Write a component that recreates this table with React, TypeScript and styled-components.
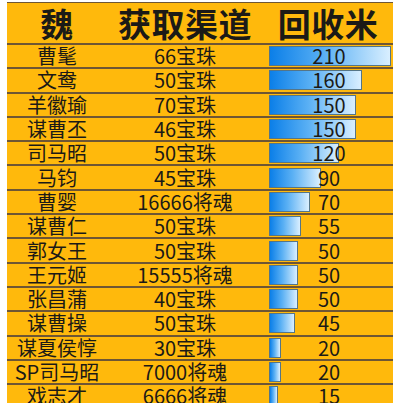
import { Fragment } from "react";
import styled, { createGlobalStyle } from "styled-components";

const GlobalStyle = createGlobalStyle`
  html, body {
    margin: 0;
    padding: 0;
    background: #ffffff;
  }
  body {
    font-family: "Noto Sans CJK SC", "Noto Sans", sans-serif;
    color: #1b1a17;
  }
`;

const Page = styled.div`
  width: 400px;
  height: 403px;
  overflow: hidden;
  padding: 2px 7px 0 7px;
  box-sizing: border-box;
`;

const Table = styled.div`
  background: #ffb90c;
  border-top: 1px solid #6e5634;
  display: grid;
  grid-template-columns: 100px 156px 130px;
`;

const HeadCell = styled.div`
  height: 40px;
  border-bottom: 2px solid #6e5634;
  display: flex;
  align-items: center;
  justify-content: center;
  font-size: 33px;
  font-weight: 700;
  line-height: 1.1;
  letter-spacing: 0.5px;
`;

const Cell = styled.div`
  height: 22.3px;
  border-bottom: 2px solid #6e5634;
  display: flex;
  align-items: center;
  justify-content: center;
  font-size: 20px;
  line-height: 1.1;
  white-space: nowrap;
`;

const BarCell = styled.div`
  height: 22.3px;
  border-bottom: 2px solid #6e5634;
  display: grid;
  align-items: center;
`;

const Bar = styled.div`
  grid-area: 1 / 1;
  height: 20px;
  margin-left: 6px;
  box-sizing: border-box;
  border: 1px solid #557587;
  background: linear-gradient(to right, #0b7fe8 0%, #5ab0f4 45%, #d9efff 100%);
`;

const Value = styled.span`
  grid-area: 1 / 1;
  justify-self: center;
  font-size: 20px;
  line-height: 1.1;
  margin-left: 2px;
`;

const rows: [string, string, number][] = [
  ["曹髦", "66宝珠", 210],
  ["文鸯", "50宝珠", 160],
  ["羊徽瑜", "70宝珠", 150],
  ["谋曹丕", "46宝珠", 150],
  ["司马昭", "50宝珠", 120],
  ["马钧", "45宝珠", 90],
  ["曹婴", "16666将魂", 70],
  ["谋曹仁", "50宝珠", 55],
  ["郭女王", "50宝珠", 50],
  ["王元姬", "15555将魂", 50],
  ["张昌蒲", "40宝珠", 50],
  ["谋曹操", "50宝珠", 45],
  ["谋夏侯惇", "30宝珠", 20],
  ["SP司马昭", "7000将魂", 20],
  ["戏志才", "6666将魂", 15],
];

export default function App() {
  return (
    <Page>
      <GlobalStyle />
      <Table>
        <HeadCell>魏</HeadCell>
        <HeadCell>获取渠道</HeadCell>
        <HeadCell>回收米</HeadCell>
        {rows.map(([name, source, value]) => (
          <Fragment key={name}>
            <Cell>{name}</Cell>
            <Cell>{source}</Cell>
            <BarCell>
              <Bar style={{ width: Math.round(value * 0.58) + "px" }} />
              <Value>{value}</Value>
            </BarCell>
          </Fragment>
        ))}
      </Table>
    </Page>
  );
}
